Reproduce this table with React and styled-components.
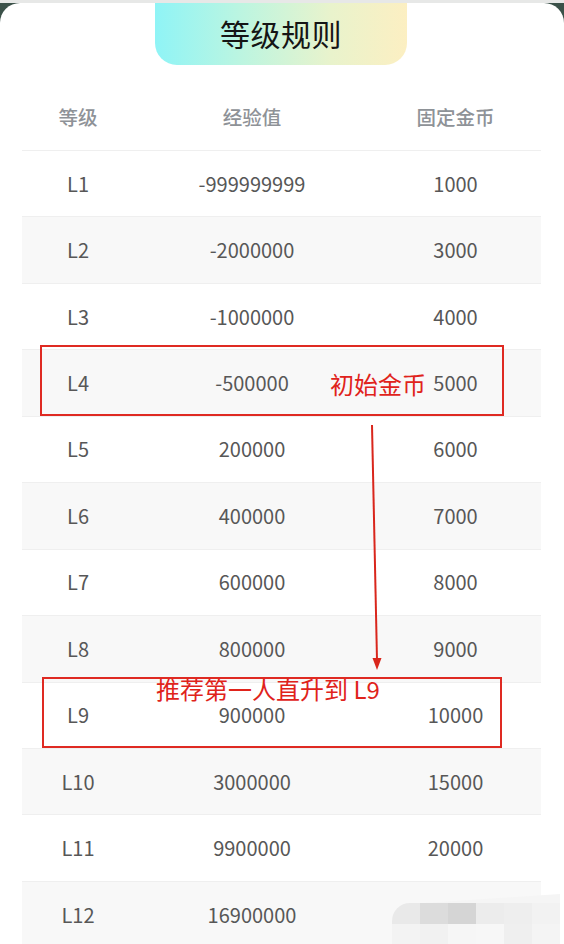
import React from "react";
import styled, { createGlobalStyle } from "styled-components";

const GlobalStyle = createGlobalStyle`
  html, body {
    margin: 0;
    padding: 0;
    background: #3b5149;
  }
  body {
    font-family: "Noto Sans CJK SC", "Noto Sans", sans-serif;
  }
`;

const COLUMNS = "112px 236px 171px";

const LEVELS = [
  { level: "L1", exp: "-999999999", coin: "1000" },
  { level: "L2", exp: "-2000000", coin: "3000" },
  { level: "L3", exp: "-1000000", coin: "4000" },
  { level: "L4", exp: "-500000", coin: "5000" },
  { level: "L5", exp: "200000", coin: "6000" },
  { level: "L6", exp: "400000", coin: "7000" },
  { level: "L7", exp: "600000", coin: "8000" },
  { level: "L8", exp: "800000", coin: "9000" },
  { level: "L9", exp: "900000", coin: "10000" },
  { level: "L10", exp: "3000000", coin: "15000" },
  { level: "L11", exp: "9900000", coin: "20000" },
  { level: "L12", exp: "16900000", coin: "" },
];

const MOSAIC = [
  "#e9e9e9", "#dcdcdc", "#d5d5d5", "#ececec", "#eeeeee", "#f2f2f2",
  "#f3f3f3", "#f1f1f1", "#f6f6f6", "#f7f7f7", "#efefef", "#f4f4f4",
];

const Page = styled.div`
  position: relative;
  width: 564px;
  height: 944px;
  overflow: hidden;
`;

const TopStrip = styled.div`
  height: 3px;
  background: #e7e8e7;
`;

const Card = styled.div`
  background: #fff;
  border-radius: 20px 20px 0 0;
  min-height: 941px;
  display: flex;
  flex-direction: column;
  & > * {
    flex-shrink: 0;
  }
`;

const TitleTab = styled.div`
  align-self: center;
  margin-left: -2px;
  width: 252px;
  height: 62px;
  border-radius: 0 0 22px 22px;
  background: linear-gradient(90deg, #8ff4f6 0%, #bdf5e0 35%, #e9f3cc 70%, #fcefc2 100%);
  display: flex;
  align-items: center;
  justify-content: center;
  padding-bottom: 2px;
  box-sizing: border-box;
  font-size: 30px;
  color: #151515;
  letter-spacing: 0.5px;
`;

const Table = styled.div`
  margin: 19px 23px 0 22px;
  display: flex;
  flex-direction: column;
`;

const Row = styled.div`
  display: grid;
  grid-template-columns: ${COLUMNS};
  align-items: center;
  height: ${(p) => (p.$head ? "67px" : "66.45px")};
  box-sizing: border-box;
  border-bottom: 1px solid #efefef;
  background: ${(p) => (p.$shade ? "#f8f8f8" : "#fff")};
  color: ${(p) => (p.$head ? "#8e9297" : "#575757")};
  font-size: ${(p) => (p.$head ? "19.5px" : "20px")};
  font-weight: ${(p) => (p.$head ? 500 : 400)};
`;

const Cell = styled.div`
  text-align: center;
  line-height: 1;
`;

const RedBox = styled.div`
  position: absolute;
  box-sizing: border-box;
  border: 2px solid #df2a22;
`;

const Note = styled.div`
  position: absolute;
  color: #e0231b;
  font-size: 24px;
  line-height: 1;
  white-space: nowrap;
`;

const Arrow = styled.svg`
  position: absolute;
  left: 360px;
  top: 420px;
`;

const Mosaic = styled.div`
  position: absolute;
  left: 392px;
  top: 903px;
  display: grid;
  grid-template-columns: repeat(6, 28px);
  grid-template-rows: repeat(2, 20.5px);
  border-top-left-radius: 18px;
  overflow: hidden;
`;

const MosaicCell = styled.div`
  background: ${(p) => p.$c};
`;

const MosaicTop = styled.div`
  position: absolute;
  left: 410px;
  top: 894px;
  width: 150px;
  height: 10px;
  background: #f5f5f5;
  clip-path: polygon(0 100%, 100% 0, 100% 100%);
`;

export default function App() {
  return (
    <Page>
      <GlobalStyle />
      <TopStrip />
      <Card>
        <TitleTab>等级规则</TitleTab>
        <Table>
          <Row $head>
            <Cell>等级</Cell>
            <Cell>经验值</Cell>
            <Cell>固定金币</Cell>
          </Row>
          {LEVELS.map((item, i) => (
            <Row key={item.level} $shade={i % 2 === 1}>
              <Cell>{item.level}</Cell>
              <Cell>{item.exp}</Cell>
              <Cell>{item.coin}</Cell>
            </Row>
          ))}
        </Table>
      </Card>

      <RedBox style={{ left: 40, top: 345, width: 464, height: 71 }} />
      <Note style={{ left: 330, top: 372 }}>初始金币</Note>
      <Arrow width="30" height="256" viewBox="0 0 30 256">
        <line x1="12" y1="5" x2="17" y2="240" stroke="#d9261c" strokeWidth="2" />
        <path d="M12.5 238 L21.5 238 L17 250 Z" fill="#d9261c" />
      </Arrow>
      <RedBox style={{ left: 42, top: 677, width: 460, height: 71 }} />
      <Note style={{ left: 156, top: 677 }}>推荐第一人直升到 L9</Note>

      <MosaicTop />
      <Mosaic>
        {MOSAIC.map((c, i) => (
          <MosaicCell key={i} $c={c} />
        ))}
      </Mosaic>
    </Page>
  );
}
